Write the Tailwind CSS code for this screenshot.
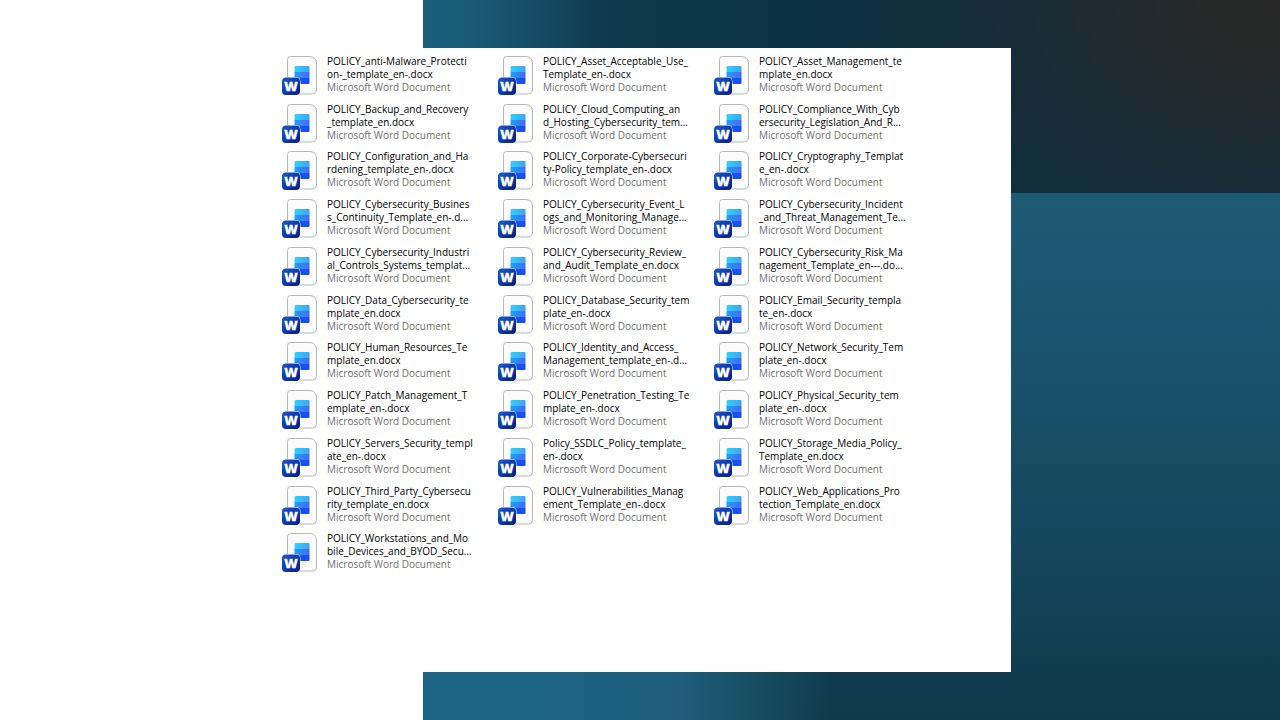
<!DOCTYPE html>
<html lang="en">

<head>
    <meta charset="UTF-8">
    <meta name="viewport" content="width=device-width, initial-scale=1.0">
    <title>Policy templates</title>
    <script src="https://cdn.jsdelivr.net/npm/@tailwindcss/browser@4"></script>
</head>

<body class="bg-white font-['Open_Sans','Noto_Sans',sans-serif]">
    <!-- Word file icon, reused by every row -->
    <svg class="absolute size-0" aria-hidden="true">
        <defs>
            <linearGradient id="stripeTop" x1="0" y1="0" x2="1" y2="0">
                <stop offset="0" stop-color="#35d0ff" />
                <stop offset="1" stop-color="#3aa4f8" />
            </linearGradient>
            <linearGradient id="stripeMid" x1="0" y1="0" x2="1" y2="0">
                <stop offset="0" stop-color="#1fa0fa" />
                <stop offset="1" stop-color="#4868f2" />
            </linearGradient>
            <linearGradient id="stripeBottom" x1="0" y1="0" x2="1" y2="0">
                <stop offset="0" stop-color="#0a58dc" />
                <stop offset="1" stop-color="#1a4cf8" />
            </linearGradient>
            <linearGradient id="badge" x1="0" y1="0" x2="1" y2="1">
                <stop offset="0" stop-color="#1c58cc" />
                <stop offset="1" stop-color="#001c84" />
            </linearGradient>
            <symbol id="wordFile" viewBox="0 0 35 42">
                <path d="M8.5 1.5H28a6.500 6.500 0 0 1 6.500 6.500v27a4 4 0 0 1-4 4h-22A3 3 0 0 1 5.500 36V4.500a3 3 0 0 1 3-3z"
                    fill="#fbfbfb" stroke="#b8b8b8" />
                <path d="M14 11h12.500a1 1 0 0 1 1 1v5H12.500v-4.500A1.500 1.500 0 0 1 14 11z" fill="url(#stripeTop)" />
                <path d="M12.500 17h15v6h-15z" fill="url(#stripeMid)" />
                <path d="M12.500 23h15v5a1 1 0 0 1-1 1h-14z" fill="url(#stripeBottom)" />
                <rect x="0" y="22" width="18.500" height="18.500" rx="4.500" fill="#fff" />
                <rect x="0" y="22.500" width="18" height="17.500" rx="4" fill="url(#badge)" />
                <text x="9" y="36" text-anchor="middle" font-family="Open Sans" font-size="13" font-weight="800"
                    fill="#fff" stroke="#fff" stroke-width="0.300">W</text>
            </symbol>
        </defs>
    </svg>

    <main class="grid min-h-screen">
        <!-- Backdrop -->
        <div class="col-start-1 row-start-1 flex">
            <div class="w-[33.05%] bg-white"></div>
            <div class="flex flex-1 flex-col">
                <div
                    class="h-[193px] bg-[radial-gradient(ellipse_450px_320px_at_100%_0,#272727,#262727_15%,transparent),linear-gradient(to_right,#1c5d7b,#195a76_50px,#164d66_110px,#0f3a4f_175px,#0d364a_240px,#0b3142_420px,#0a3145)]">
                </div>
                <div
                    class="flex-1 bg-[linear-gradient(to_right,#1b6484,#1c6484_110px,#1e5c7a_260px,#185066_320px,transparent_410px),linear-gradient(to_bottom,#1f5a75,#1b5772_15%,#1a516d_35%,#174b61_52%,#154760_62%,#134257_78%,#103b4e_92%,#10394c)]">
                </div>
            </div>
        </div>

        <!-- File window -->
        <section class="col-start-1 row-start-1 my-12 w-[79%] bg-white pt-[7px] pr-20 pb-[92px] pl-[282px]">
            <ul id="files" class="grid h-full auto-rows-fr grid-cols-[repeat(3,216px)]"></ul>
        </section>
    </main>

    <script>
        // Each entry is the two visible lines of a file name
        const files = [
            ["POLICY_anti-Malware_Protecti", "on-_template_en-.docx"],
            ["POLICY_Asset_Acceptable_Use_", "Template_en-.docx"],
            ["POLICY_Asset_Management_te", "mplate_en.docx"],
            ["POLICY_Backup_and_Recovery", "_template_en.docx"],
            ["POLICY_Cloud_Computing_an", "d_Hosting_Cybersecurity_tem..."],
            ["POLICY_Compliance_With_Cyb", "ersecurity_Legislation_And_R..."],
            ["POLICY_Configuration_and_Ha", "rdening_template_en-.docx"],
            ["POLICY_Corporate-Cybersecuri", "ty-Policy_template_en-.docx"],
            ["POLICY_Cryptography_Templat", "e_en-.docx"],
            ["POLICY_Cybersecurity_Busines", "s_Continuity_Template_en-.d..."],
            ["POLICY_Cybersecurity_Event_L", "ogs_and_Monitoring_Manage..."],
            ["POLICY_Cybersecurity_Incident", "_and_Threat_Management_Te..."],
            ["POLICY_Cybersecurity_Industri", "al_Controls_Systems_templat..."],
            ["POLICY_Cybersecurity_Review_", "and_Audit_Template_en.docx"],
            ["POLICY_Cybersecurity_Risk_Ma", "nagement_Template_en---.do..."],
            ["POLICY_Data_Cybersecurity_te", "mplate_en.docx"],
            ["POLICY_Database_Security_tem", "plate_en-.docx"],
            ["POLICY_Email_Security_templa", "te_en-.docx"],
            ["POLICY_Human_Resources_Te", "mplate_en.docx"],
            ["POLICY_Identity_and_Access_", "Management_template_en-.d..."],
            ["POLICY_Network_Security_Tem", "plate_en-.docx"],
            ["POLICY_Patch_Management_T", "emplate_en-.docx"],
            ["POLICY_Penetration_Testing_Te", "mplate_en-.docx"],
            ["POLICY_Physical_Security_tem", "plate_en-.docx"],
            ["POLICY_Servers_Security_templ", "ate_en-.docx"],
            ["Policy_SSDLC_Policy_template_", "en-.docx"],
            ["POLICY_Storage_Media_Policy_", "Template_en.docx"],
            ["POLICY_Third_Party_Cybersecu", "rity_template_en.docx"],
            ["POLICY_Vulnerabilities_Manag", "ement_Template_en-.docx"],
            ["POLICY_Web_Applications_Pro", "tection_Template_en.docx"],
            ["POLICY_Workstations_and_Mo", "bile_Devices_and_BYOD_Secu..."],
        ];

        document.getElementById("files").innerHTML = files.map(([first, second]) => `
            <li>
                <a href="#" class="flex gap-[10px] text-[10px] leading-[13px] whitespace-nowrap text-black">
                    <svg class="h-[42px] w-[35px] shrink-0" aria-hidden="true"><use href="#wordFile" /></svg>
                    <span>
                        ${first}<br>${second}
                        <span class="block text-[#707070]">Microsoft Word Document</span>
                    </span>
                </a>
            </li>`).join("");
    </script>
</body>

</html>
